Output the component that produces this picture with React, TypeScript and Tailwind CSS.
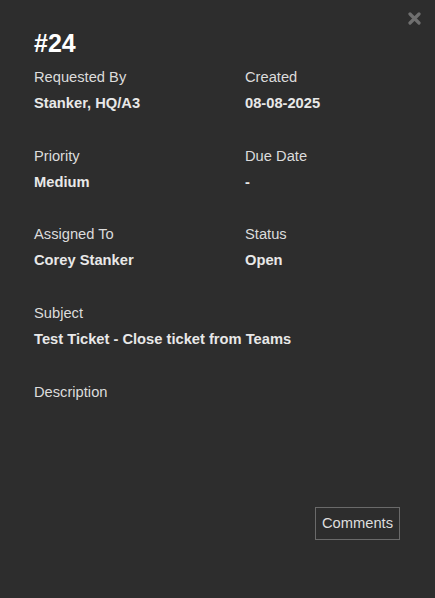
import React from "react";

const fields: [string, string][] = [
  ["Requested By", "Stanker, HQ/A3"],
  ["Created", "08-08-2025"],
  ["Priority", "Medium"],
  ["Due Date", "-"],
  ["Assigned To", "Corey Stanker"],
  ["Status", "Open"],
];

function Field({ label, value }: { label: string; value?: string }) {
  return (
    <div className="flex flex-col">
      <span className="block text-[14.7px] leading-[20px] text-[#dcdcdc]">{label}</span>
      {value !== undefined && (
        <span className="block mt-[6px] text-[14.7px] leading-[20px] font-bold text-[#e8e8e8]">{value}</span>
      )}
    </div>
  );
}

export default function App() {
  return (
    <div
      className="relative w-[435px] h-[598px] bg-[#2d2d2d] overflow-hidden"
      style={{ fontFamily: '"Liberation Sans", Arial, sans-serif' }}
    >
      {/* close */}
      <button className="absolute right-[14px] top-[12px] p-0 bg-transparent border-none">
        <svg width="13" height="13" viewBox="0 0 13 13">
          <path d="M2 2 L11 11 M11 2 L2 11" stroke="#6f6f6f" strokeWidth="3.2" strokeLinecap="round" />
        </svg>
      </button>

      <div className="pl-[34px] pr-[35px] pt-[29px] flex flex-col">
        <h1 className="text-[25px] leading-[28px] font-bold text-white">#24</h1>

        <div className="mt-[10px] grid grid-cols-[211px_1fr] gap-y-[32.7px]">
          {fields.map(([l, v]) => (
            <Field key={l} label={l} value={v} />
          ))}
          <div className="col-span-2">
            <Field label="Subject" value="Test Ticket - Close ticket from Teams" />
          </div>
          <div className="col-span-2">
            <Field label="Description" />
          </div>
        </div>

        <div className="flex justify-end mt-[105px]">
          <button className="h-[33px] px-[6px] border border-[#6a6a6a] text-[14.7px] leading-[20px] text-[#dedede] bg-transparent">
            Comments
          </button>
        </div>
      </div>
    </div>
  );
}
